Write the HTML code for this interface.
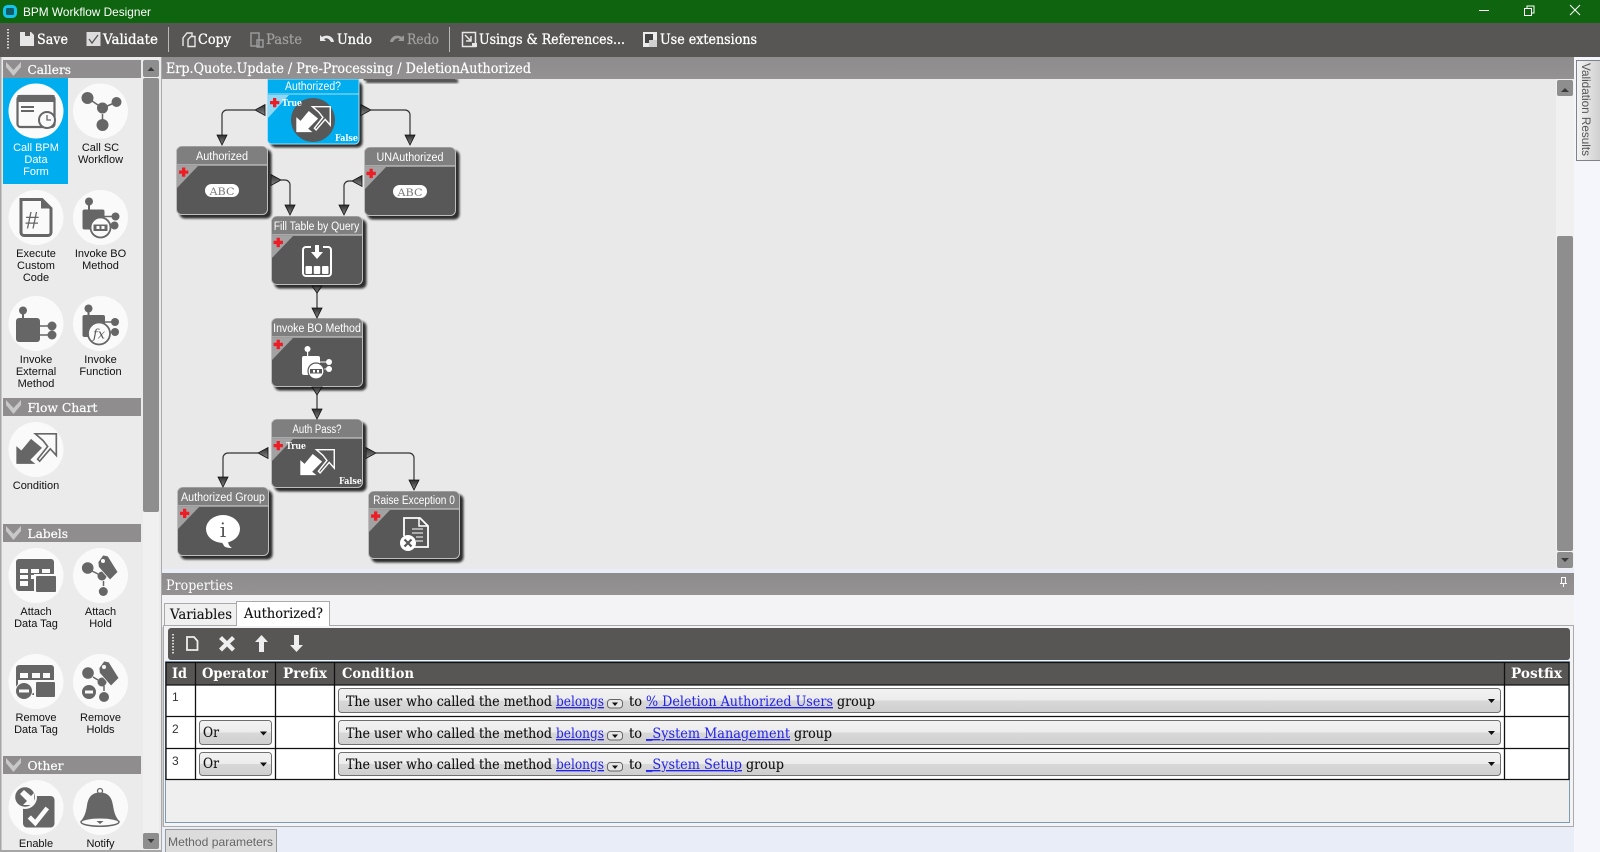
<!DOCTYPE html>
<html lang="en"><head><meta charset="utf-8"><title>BPM Workflow Designer</title>
<style>
html,body{margin:0;padding:0;width:1600px;height:852px;overflow:hidden;background:#f4f6fb}
svg{display:block}
.s{font-family:"DejaVu Serif","Liberation Serif",serif}
.a{font-family:"Liberation Sans",Arial,sans-serif}
.tb{font-family:"DejaVu Serif","Liberation Serif",serif;font-size:13.5px;fill:#fff;stroke:#fff;stroke-width:.3px}
.tg{font-family:"DejaVu Serif","Liberation Serif",serif;font-size:13.5px;fill:#a0a0a0;stroke:#a0a0a0;stroke-width:.2px}
.hd{font-family:"DejaVu Serif","Liberation Serif",serif;font-size:12.5px;fill:#fff;stroke:#fff;stroke-width:.2px}
.lb{font-family:"Liberation Sans",Arial,sans-serif;font-size:11px;fill:#111;text-anchor:middle}
.nt{font-family:"Liberation Sans",Arial,sans-serif;font-size:11.5px;fill:#fff;text-anchor:middle}
.th{font-family:"DejaVu Serif","Liberation Serif",serif;font-size:13.5px;font-weight:bold;fill:#fff}
.td{font-family:"DejaVu Serif","Liberation Serif",serif;font-size:13.5px;fill:#111;stroke:#111;stroke-width:.12px}
.lk{font-family:"DejaVu Serif","Liberation Serif",serif;font-size:13.5px;fill:#2222ee;text-decoration:underline}
.tf{font-family:"DejaVu Serif","Liberation Serif",serif;font-size:9.5px;font-weight:bold;fill:#fff}
</style></head><body>
<svg width="1600" height="852" viewBox="0 0 1600 852" xmlns="http://www.w3.org/2000/svg">
<defs>
<linearGradient id="btn" x1="0" y1="0" x2="0" y2="1"><stop offset="0" stop-color="#f2f2f2"/><stop offset=".5" stop-color="#ececec"/><stop offset=".5" stop-color="#d8d8d8"/><stop offset="1" stop-color="#cfcfcf"/></linearGradient>
<linearGradient id="hdr" x1="0" y1="0" x2="0" y2="1"><stop offset="0" stop-color="#8d8b8b"/><stop offset="1" stop-color="#949292"/></linearGradient>
<linearGradient id="vt" x1="0" y1="0" x2="1" y2="0"><stop offset="0" stop-color="#f4f4f4"/><stop offset="1" stop-color="#cfcfcf"/></linearGradient>
<linearGradient id="tri" x1="0" y1="0" x2="0" y2="1"><stop offset="0" stop-color="#2e2e2e"/><stop offset="1" stop-color="#888"/></linearGradient>
<filter id="sh" x="-10%" y="-10%" width="125%" height="130%"><feGaussianBlur stdDeviation="1"/></filter>
</defs>

<!-- title bar -->
<rect width="1600" height="23" fill="#0e640f"/>
<rect x="4.500" y="6.500" width="11" height="10" rx="3" fill="#0f5c66" stroke="#12c4ee" stroke-width="3"/>
<text x="23" y="16" class="a" font-size="12" fill="#fff" textLength="128" lengthAdjust="spacingAndGlyphs">BPM Workflow Designer</text>
<path d="M1479 10.500H1489" stroke="#fff" stroke-width="1"/>
<path d="M1524.500 8.500h7v7h-7zM1527 8.500v-2.500h7v7h-2.500" fill="none" stroke="#fff" stroke-width="1"/>
<path d="M1570 5l10 10M1580 5l-10 10" stroke="#fff" stroke-width="1"/>

<!-- toolbar -->
<rect y="23" width="1600" height="34" fill="#585654"/>
<path d="M8 29V50" stroke="#fff" stroke-width="1.500" stroke-dasharray="1.500 1.500"/>
<path d="M20 32h11l3 3v11H20z" fill="#e6e6e6"/><rect x="25" y="32" width="5" height="4" fill="#585654"/>
<text x="37" y="44" class="tb" textLength="31" lengthAdjust="spacingAndGlyphs">Save</text>
<rect x="86.500" y="32" width="14" height="14" fill="#dcdcdc"/><path d="M89 39l3 4 6-8" fill="none" stroke="#555" stroke-width="1.300"/>
<text x="103" y="44" class="tb" textLength="55" lengthAdjust="spacingAndGlyphs">Validate</text>
<path d="M168.500 27V52" stroke="#b9b9b9"/>
<path d="M183 46v-8l4-5h5v3" fill="none" stroke="#e6e6e6" stroke-width="1.400"/>
<path d="M188 46.500v-7l3-3h4v10z" fill="none" stroke="#e6e6e6" stroke-width="1.400"/>
<text x="198" y="44" class="tb" textLength="33" lengthAdjust="spacingAndGlyphs">Copy</text>
<path d="M251 33h8v13h-8zM257 40h6v7h-6z" fill="none" stroke="#999" stroke-width="1.500"/>
<text x="266" y="44" class="tg" textLength="36" lengthAdjust="spacingAndGlyphs">Paste</text>
<path d="M320 35v6h6l-2-2c2-1.500 5-1 7 3l3 0c-1-6-7-8-12-5z" fill="#eaeaea"/>
<text x="337" y="44" class="tb" textLength="35" lengthAdjust="spacingAndGlyphs">Undo</text>
<path d="M404 35v6h-6l2-2c-2-1.500-5-1-7 3l-3 0c1-6 7-8 12-5z" fill="#999"/>
<text x="407" y="44" class="tg" textLength="32" lengthAdjust="spacingAndGlyphs">Redo</text>
<path d="M449.500 27V52" stroke="#b9b9b9"/>
<rect x="462.500" y="32.500" width="13" height="14" fill="none" stroke="#e6e6e6" stroke-width="1.500"/><path d="M465 35l6 6M471 36v5h-5" fill="none" stroke="#e6e6e6" stroke-width="1.500"/><rect x="472" y="43" width="5" height="4" fill="#e6e6e6"/>
<text x="479" y="44" class="tb" textLength="146" lengthAdjust="spacingAndGlyphs">Usings &amp; References...</text>
<rect x="643" y="32" width="14" height="15" fill="#ececec"/><rect x="645" y="34" width="8" height="9" fill="#444"/><rect x="649" y="40" width="8" height="7" fill="#d0d0d0"/>
<text x="660" y="44" class="tb" textLength="97" lengthAdjust="spacingAndGlyphs">Use extensions</text>

<!-- left panel -->
<rect y="57" width="162" height="795" fill="#ebebeb"/>
<rect y="57" width="1.500" height="795" fill="#a6a6a6"/>
<rect y="850" width="162" height="2" fill="#a6a6a6"/>
<rect x="161" y="57" width="1.500" height="795" fill="#a9a9a9"/>
<!-- left scrollbar -->
<rect x="143" y="60" width="16" height="790" fill="#f0f0f0"/>
<rect x="143" y="60" width="16" height="17" rx="2" fill="#8e8e8e"/><path d="M147.500 71l3.500-4 3.500 4z" fill="#3a3a3a"/>
<rect x="143" y="78" width="16" height="434" rx="2" fill="#8e8e8e"/>
<rect x="143" y="833" width="16" height="16" rx="2" fill="#8e8e8e"/><path d="M147.500 839l3.500 4 3.500-4z" fill="#3a3a3a"/>

<!-- section headers -->
<rect x="3" y="60" width="138" height="18" fill="#8f8d8d"/><path d="M6 62l7.500 8 7.500-8v5l-7.500 9-7.500-9z" fill="#c8c8c8"/>
<text x="27.500" y="74" class="hd" textLength="43.500" lengthAdjust="spacingAndGlyphs">Callers</text>
<rect x="3" y="398" width="138" height="18" fill="#8f8d8d"/><path d="M6 400l7.500 8 7.500-8v5l-7.500 9-7.500-9z" fill="#c8c8c8"/>
<text x="27.500" y="412" class="hd" textLength="70" lengthAdjust="spacingAndGlyphs">Flow Chart</text>
<rect x="3" y="524" width="138" height="18" fill="#8f8d8d"/><path d="M6 526l7.500 8 7.500-8v5l-7.500 9-7.500-9z" fill="#c8c8c8"/>
<text x="27.500" y="538" class="hd" textLength="40.500" lengthAdjust="spacingAndGlyphs">Labels</text>
<rect x="3" y="756" width="138" height="18" fill="#8f8d8d"/><path d="M6 758l7.500 8 7.500-8v5l-7.500 9-7.500-9z" fill="#c8c8c8"/>
<text x="27.500" y="770" class="hd" textLength="36" lengthAdjust="spacingAndGlyphs">Other</text>

<!-- selected tile -->
<rect x="3" y="78" width="65" height="106" fill="#00aeef"/>

<!-- circles -->
<g fill="#fafafa">
<circle cx="36" cy="111" r="27.500"/><circle cx="100.500" cy="111" r="27.500"/>
<circle cx="36" cy="217.500" r="27.500"/><circle cx="100.500" cy="217.500" r="27.500"/>
<circle cx="36" cy="323.500" r="27.500"/><circle cx="100.500" cy="323.500" r="27.500"/>
<circle cx="36" cy="449.500" r="27.500"/>
<circle cx="36" cy="575.500" r="27.500"/><circle cx="100.500" cy="575.500" r="27.500"/>
<circle cx="36" cy="681.500" r="27.500"/><circle cx="100.500" cy="681.500" r="27.500"/>
<circle cx="36" cy="807.500" r="27.500"/><circle cx="100.500" cy="807.500" r="27.500"/>
</g>

<!-- Call BPM -->
<g transform="translate(36,111)">
<rect x="-18.500" y="-15" width="37" height="31" rx="3" fill="none" stroke="#666" stroke-width="2.200"/>
<path d="M-18.500 -16h37v7h-37z" fill="#666"/>
<path d="M-15 -5h13v2h-13zM-15 -1h13v2h-13z" fill="#666"/>
<circle cx="11" cy="9" r="8" fill="#fafafa" stroke="#666" stroke-width="2"/>
<path d="M11 4v5h4" fill="none" stroke="#666" stroke-width="1.300"/>
</g>
<!-- Call SC -->
<g transform="translate(100.500,111)" fill="#666">
<path d="M-13 -13L2 -3L16 -9" stroke="#666" stroke-width="1.500" fill="none"/>
<path d="M2 3V9" stroke="#666" stroke-width="1.500"/>
<circle cx="-13" cy="-13" r="6"/><circle cx="16" cy="-9" r="5"/><circle cx="2" cy="-3" r="5.500"/><circle cx="2" cy="14" r="6"/>
</g>
<!-- Custom Code -->
<g transform="translate(36,217.500)">
<path d="M-15 -18H6L15 -9V15a3 3 0 0 1-3 3H-12a3 3 0 0 1-3-3z" fill="none" stroke="#666" stroke-width="3"/>
<path d="M5 -19V-9H16z" fill="#666"/>
<text x="-4" y="11" class="a" font-size="24" fill="#666" text-anchor="middle">#</text>
</g>
<!-- Invoke BO -->
<g transform="translate(100.500,217.500)" fill="#666">
<circle cx="-11.500" cy="-16" r="4"/><rect x="-12.500" y="-14" width="2" height="8"/>
<rect x="-18" y="-8" width="22" height="20" rx="2"/>
<path d="M4 -1H14M4 7H14" stroke="#666" stroke-width="1.500"/>
<circle cx="15" cy="-1" r="4"/><circle cx="14" cy="8" r="4"/>
<circle cx="0" cy="10" r="10" fill="#fafafa" stroke="#666" stroke-width="1.800"/>
<rect x="-7" y="7" width="14" height="6.500" fill="#666"/><rect x="-4" y="8.500" width="3" height="3" fill="#fafafa"/><rect x="1" y="8.500" width="3" height="3" fill="#fafafa"/>
</g>
<!-- Invoke External -->
<g transform="translate(36,323.500)" fill="#666">
<circle cx="-13" cy="-13" r="4"/><rect x="-14" y="-12" width="2" height="8"/>
<rect x="-20" y="-5.500" width="24" height="24" rx="3"/>
<path d="M4 2.500H14M4 11.500H14" stroke="#666" stroke-width="1.500"/>
<circle cx="16" cy="2.500" r="4.500"/><circle cx="16" cy="11.500" r="4.500"/>
</g>
<!-- Invoke Function -->
<g transform="translate(100.500,323.500)" fill="#666">
<circle cx="-12" cy="-15" r="4"/><rect x="-13" y="-14" width="2" height="8"/>
<rect x="-18" y="-8.500" width="22.500" height="22" rx="2"/>
<path d="M4 -1.500H13M4 8.500H13" stroke="#666" stroke-width="1.500"/>
<circle cx="14.500" cy="-1.500" r="4"/><circle cx="14.500" cy="8.500" r="4"/>
<circle cx="-1.500" cy="10" r="11" fill="#fafafa" stroke="#666" stroke-width="1.800"/>
<text x="-1.500" y="15" class="s" font-size="13" font-style="italic" fill="#555" text-anchor="middle">fx</text>
</g>
<!-- Condition -->
<g transform="translate(36,449.500) scale(.333) translate(-107,-509)">
<path d="M48 552V499L63 512L92 477L125 504L90 540L105 552Z" fill="#666"/>
<path d="M105 462H168V527L150 507L118 544L112 538L142 500L128 482Z" fill="none" stroke="#666" stroke-width="5"/>
</g>
<!-- Attach Data Tag -->
<g>
<rect x="16" y="559" width="38" height="32" rx="3" fill="#666"/>
<rect x="20" y="569" width="8" height="4" fill="#fafafa"/><rect x="31" y="569" width="8" height="4" fill="#fafafa"/><rect x="42" y="569" width="8" height="4" fill="#fafafa"/>
<rect x="20" y="575" width="8" height="4" fill="#fafafa"/><rect x="31" y="575" width="4" height="4" fill="#fafafa"/>
<rect x="20" y="581" width="8" height="5" fill="#fafafa"/>
<rect x="34" y="574" width="24" height="20" fill="#fafafa"/>
<rect x="36" y="576" width="20" height="16" rx="1" fill="#666"/>
</g>
<!-- Attach Hold -->
<g fill="#666">
<path d="M92 571L98 574M103.500 581V586" fill="none" stroke="#666" stroke-width="1.500"/>
<circle cx="87.700" cy="568" r="5.800"/>
<circle cx="102" cy="576" r="4.500"/>
<path d="M98 562L103 555L108 556L118 572L110 580L98.500 567Z" stroke="#fafafa" stroke-width=".8"/>
<circle cx="103" cy="561" r="2" fill="#fafafa"/>
<circle cx="103.300" cy="591.500" r="4.500"/>
</g>
<!-- Remove Data Tag -->
<g>
<rect x="16" y="665" width="38" height="30" rx="3" fill="#666"/>
<rect x="20" y="673" width="8" height="5" fill="#fafafa"/><rect x="32" y="673" width="8" height="5" fill="#fafafa"/><rect x="43" y="673" width="7" height="5" fill="#fafafa"/>
<rect x="18" y="680" width="34" height="13" fill="#fafafa"/>
<rect x="34" y="680" width="23" height="19" fill="#fafafa"/>
<rect x="36" y="682" width="19" height="15" rx="1" fill="#666"/>
<circle cx="24" cy="691" r="9" fill="#fafafa"/><circle cx="24" cy="691" r="8" fill="#666"/><rect x="19" y="689.500" width="10" height="3" fill="#fafafa"/>
</g>
<!-- Remove Holds -->
<g fill="#666">
<path d="M93 677L98 680M104 686V691" fill="none" stroke="#666" stroke-width="1.500"/>
<circle cx="88" cy="673" r="5.800"/>
<circle cx="102" cy="682" r="4.500"/>
<path d="M99 668L104 661L109 662L119 678L111 686L99.500 673Z" stroke="#fafafa" stroke-width=".8"/>
<circle cx="104" cy="667" r="2" fill="#fafafa"/>
<circle cx="104" cy="697" r="5"/>
<circle cx="89" cy="692" r="7.500" stroke="#fafafa"/><rect x="85" y="690.500" width="8" height="3" fill="#fafafa"/>
</g>
<!-- Enable -->
<g>
<rect x="23" y="796" width="31.500" height="31.500" rx="4" fill="#666"/>
<circle cx="25" cy="797" r="12" fill="#fafafa"/><circle cx="25" cy="797" r="9.800" fill="#666"/>
<path d="M34 805V793L31 796L24 790L20 794L27 801L23 805Z" fill="#fafafa"/>
<path d="M29.300 817l6 6 12-15" fill="none" stroke="#fafafa" stroke-width="4.500"/>
</g>
<!-- Notify -->
<g fill="#666">
<circle cx="100" cy="791" r="2.500" fill="none" stroke="#666" stroke-width="1.300"/>
<path d="M100 792.500c-9 0-12 6-13 13-1 6-2 10-5 14l18 4 18-4c-3-4-4-8-5-14-1-7-4-13-13-13z"/>
<ellipse cx="100" cy="822" rx="19" ry="4.300" fill="#fafafa" stroke="#666" stroke-width="1.500"/>
<path d="M96.500 821h7l-3.500 3z"/>
</g>

<!-- tile labels -->
<text x="36" y="151" class="lb" style="fill:#fff">Call BPM</text><text x="36" y="163" class="lb" style="fill:#fff">Data</text><text x="36" y="175" class="lb" style="fill:#fff">Form</text>
<text x="100.500" y="151" class="lb">Call SC</text><text x="100.500" y="163" class="lb">Workflow</text>
<text x="36" y="257" class="lb">Execute</text><text x="36" y="269" class="lb">Custom</text><text x="36" y="281" class="lb">Code</text>
<text x="100.500" y="257" class="lb">Invoke BO</text><text x="100.500" y="269" class="lb">Method</text>
<text x="36" y="363" class="lb">Invoke</text><text x="36" y="375" class="lb">External</text><text x="36" y="387" class="lb">Method</text>
<text x="100.500" y="363" class="lb">Invoke</text><text x="100.500" y="375" class="lb">Function</text>
<text x="36" y="489" class="lb">Condition</text>
<text x="36" y="615" class="lb">Attach</text><text x="36" y="627" class="lb">Data Tag</text>
<text x="100.500" y="615" class="lb">Attach</text><text x="100.500" y="627" class="lb">Hold</text>
<text x="36" y="721" class="lb">Remove</text><text x="36" y="733" class="lb">Data Tag</text>
<text x="100.500" y="721" class="lb">Remove</text><text x="100.500" y="733" class="lb">Holds</text>
<text x="36" y="847" class="lb">Enable</text>
<text x="100.500" y="847" class="lb">Notify</text>

<!-- canvas -->
<rect x="162" y="79" width="1394" height="490" fill="#e9e9e9"/>
<rect x="1556" y="79" width="18" height="490" fill="#f0f0f0"/>
<rect x="1557" y="80" width="16" height="16" rx="2" fill="#8e8e8e"/><path d="M1561 92l4-4 4 4z" fill="#3a3a3a"/>
<rect x="1557" y="236" width="16" height="315" rx="2" fill="#8e8e8e"/>
<rect x="1557" y="552" width="16" height="16" rx="2" fill="#8e8e8e"/><path d="M1561 558l4 4 4-4z" fill="#3a3a3a"/>

<!-- connectors -->
<g fill="none" stroke="#333" stroke-width="1.200">
<path d="M255 110H227a5 5 0 0 0-5 5V136"/>
<path d="M371 110H405a5 5 0 0 1 5 5V136"/>
<path d="M281 180H285a5 5 0 0 1 5 5V206"/>
<path d="M352 181H349a5 5 0 0 0-5 5V206"/>
<path d="M317 290V309"/><path d="M317 394V409"/>
<path d="M258 453H228a5 5 0 0 0-5 5V478"/>
<path d="M376 453H409a5 5 0 0 1 5 5V481"/>
</g>

<!-- top partial node -->
<rect x="366" y="79" width="92" height="4" fill="#222" opacity=".8" filter="url(#sh)"/>
<rect x="363.500" y="79" width="91.500" height="1.500" fill="#585858"/>

<!-- nodes: shadow + body -->
<g>
<rect x="270.500" y="82" width="92" height="65.500" rx="5" fill="#111" opacity=".85" filter="url(#sh)"/>
<path d="M267.500 79V140a4 4 0 0 0 4 4H355a4 4 0 0 0 4-4V79z" fill="#00aeef" stroke="#a8def5"/>
<path d="M268 94H359" stroke="#a8def5"/>
<path d="M268 95H289L268 118z" fill="#8ed8f5"/>
<circle cx="313" cy="120" r="22" fill="#585858"/>
<g transform="translate(313,120) scale(.283) translate(-107,-509)">
<path d="M48 552V499L63 512L92 477L125 504L90 540L105 552Z" fill="#fff"/>
<path d="M105 462H168V527L150 507L118 544L112 538L142 500L128 482Z" fill="none" stroke="#fff" stroke-width="5"/>
</g>
<text x="313" y="90" class="nt" textLength="56" lengthAdjust="spacingAndGlyphs">Authorized?</text>
<text x="282" y="106" class="tf" textLength="20" lengthAdjust="spacingAndGlyphs">True</text>
<text x="335" y="141" class="tf" textLength="23" lengthAdjust="spacingAndGlyphs">False</text>
<path d="M273 98h3.300v3h3v3.300h-3v3h-3.300v-3h-3v-3.300h3z" fill="#ee1c25"/>
</g>

<g>
<rect x="179.500" y="149.500" width="92" height="69" rx="5" fill="#111" opacity=".85" filter="url(#sh)"/>
<rect x="176.500" y="146.500" width="91" height="68" rx="5" fill="#585858" stroke="#bdbdbd"/>
<path d="M177 165V151.500a5 5 0 0 1 5-5H262a5 5 0 0 1 5 5V165z" fill="#7f7f7f"/><path d="M177 165H267" stroke="#c4c4c4" stroke-width="1.200"/>
<path d="M177 166H198L177 188z" fill="#a2a2a2"/>
<path d="M182 167.500h3.300v3h3v3.300h-3v3h-3.300v-3h-3v-3.300h3z" fill="#ee1c25"/>
<text x="222" y="160" class="nt" textLength="52" lengthAdjust="spacingAndGlyphs">Authorized</text>
<rect x="205" y="184" width="34" height="13" rx="6.500" fill="#fff"/>
<text x="222" y="195" class="s" font-size="10.500" fill="#777" text-anchor="middle" textLength="25" lengthAdjust="spacingAndGlyphs">ABC</text>
</g>

<g>
<rect x="367.500" y="150.500" width="92" height="69" rx="5" fill="#111" opacity=".85" filter="url(#sh)"/>
<rect x="364.500" y="147.500" width="91" height="68" rx="5" fill="#585858" stroke="#bdbdbd"/>
<path d="M365 166V152.500a5 5 0 0 1 5-5H450a5 5 0 0 1 5 5V166z" fill="#7f7f7f"/><path d="M365 166H455" stroke="#c4c4c4" stroke-width="1.200"/>
<path d="M365 167H386L365 189z" fill="#a2a2a2"/>
<path d="M369.500 168.800h3.300v3h3v3.300h-3v3h-3.300v-3h-3v-3.300h3z" fill="#ee1c25"/>
<text x="410" y="161" class="nt" textLength="67" lengthAdjust="spacingAndGlyphs">UNAuthorized</text>
<rect x="393" y="185" width="34" height="13" rx="6.500" fill="#fff"/>
<text x="410" y="196" class="s" font-size="10.500" fill="#777" text-anchor="middle" textLength="25" lengthAdjust="spacingAndGlyphs">ABC</text>
</g>

<g>
<rect x="274.500" y="219.500" width="92" height="69" rx="5" fill="#111" opacity=".85" filter="url(#sh)"/>
<rect x="271.500" y="216.500" width="91" height="68" rx="5" fill="#585858" stroke="#bdbdbd"/>
<path d="M272 235V221.500a5 5 0 0 1 5-5H357a5 5 0 0 1 5 5V235z" fill="#7f7f7f"/><path d="M272 235H362" stroke="#c4c4c4" stroke-width="1.200"/>
<path d="M272 236H293L272 258z" fill="#a2a2a2"/>
<path d="M276.600 237.800h3.300v3h3v3.300h-3v3h-3.300v-3h-3v-3.300h3z" fill="#ee1c25"/>
<text x="316.500" y="230" class="nt" textLength="85.600" lengthAdjust="spacingAndGlyphs">Fill Table by Query</text>
<path d="M311 247H306a3 3 0 0 0-3 3V273a3 3 0 0 0 3 3H328a3 3 0 0 0 3-3V250a3 3 0 0 0-3-3H323" fill="none" stroke="#fff" stroke-width="2"/>
<path d="M315 245h4v7h4l-6 7-6-7h4z" fill="#fff"/>
<rect x="305.500" y="266" width="6.500" height="8" rx="1" fill="#fff"/><rect x="313.750" y="266" width="6.500" height="8" rx="1" fill="#fff"/><rect x="322" y="266" width="6.500" height="8" rx="1" fill="#fff"/>
</g>

<g>
<rect x="274.500" y="321.500" width="92" height="69" rx="5" fill="#111" opacity=".85" filter="url(#sh)"/>
<rect x="271.500" y="318.500" width="91" height="68" rx="5" fill="#585858" stroke="#bdbdbd"/>
<path d="M272 337V323.500a5 5 0 0 1 5-5H357a5 5 0 0 1 5 5V337z" fill="#7f7f7f"/><path d="M272 337H362" stroke="#c4c4c4" stroke-width="1.200"/>
<path d="M272 338H293L272 360z" fill="#a2a2a2"/>
<path d="M276.600 339.800h3.300v3h3v3.300h-3v3h-3.300v-3h-3v-3.300h3z" fill="#ee1c25"/>
<text x="317" y="332" class="nt" textLength="87.700" lengthAdjust="spacingAndGlyphs">Invoke BO Method</text>
<g fill="#fff">
<circle cx="307.500" cy="349" r="3"/><rect x="307" y="350" width="1.200" height="7"/>
<rect x="302" y="356" width="18" height="19" rx="2"/>
<path d="M320 362H327M320 369H327" stroke="#fff" stroke-width="1"/>
<circle cx="329" cy="362" r="3"/><circle cx="329" cy="369" r="3"/>
<circle cx="316" cy="371" r="8" fill="#fff" stroke="#585858" stroke-width="1.200"/>
<rect x="310" y="369" width="12" height="4.500" fill="#585858"/><rect x="313" y="370" width="2" height="2.500" fill="#fff"/><rect x="317" y="370" width="2" height="2.500" fill="#fff"/>
</g>
</g>

<g>
<rect x="274.500" y="422.500" width="92" height="69" rx="5" fill="#111" opacity=".85" filter="url(#sh)"/>
<rect x="271.500" y="419.500" width="91" height="68" rx="5" fill="#585858" stroke="#bdbdbd"/>
<path d="M272 438V424.500a5 5 0 0 1 5-5H357a5 5 0 0 1 5 5V438z" fill="#7f7f7f"/><path d="M272 438H362" stroke="#c4c4c4" stroke-width="1.200"/>
<path d="M272 439H293L272 461z" fill="#a2a2a2"/>
<path d="M276.600 441h3.300v3h3v3.300h-3v3h-3.300v-3h-3v-3.300h3z" fill="#ee1c25"/>
<text x="317" y="433" class="nt" textLength="49" lengthAdjust="spacingAndGlyphs">Auth Pass?</text>
<g transform="translate(317,463) scale(.283) translate(-107,-509)">
<path d="M48 552V499L63 512L92 477L125 504L90 540L105 552Z" fill="#fff"/>
<path d="M105 462H168V527L150 507L118 544L112 538L142 500L128 482Z" fill="none" stroke="#fff" stroke-width="5"/>
</g>
<text x="286" y="449" class="tf" textLength="20" lengthAdjust="spacingAndGlyphs">True</text>
<text x="339" y="484" class="tf" textLength="23" lengthAdjust="spacingAndGlyphs">False</text>
</g>

<g>
<rect x="180.500" y="490.500" width="92" height="69" rx="5" fill="#111" opacity=".85" filter="url(#sh)"/>
<rect x="177.500" y="487.500" width="91" height="68" rx="5" fill="#585858" stroke="#bdbdbd"/>
<path d="M178 506V492.500a5 5 0 0 1 5-5H263a5 5 0 0 1 5 5V506z" fill="#7f7f7f"/><path d="M178 506H268" stroke="#c4c4c4" stroke-width="1.200"/>
<path d="M178 507H199L178 529z" fill="#a2a2a2"/>
<path d="M183 508.700h3.300v3h3v3.300h-3v3h-3.300v-3h-3v-3.300h3z" fill="#ee1c25"/>
<text x="223" y="501" class="nt" textLength="84" lengthAdjust="spacingAndGlyphs">Authorized Group</text>
<ellipse cx="223" cy="529" rx="17" ry="14" fill="#fff"/><path d="M218 540c3 2 5 3 6 6 2 2 6 2 8 2-3-2-4-4-4-8z" fill="#fff"/>
<text x="223" y="537" class="s" font-size="20" fill="#585858" text-anchor="middle">i</text>
</g>

<g>
<rect x="371.500" y="494.500" width="92" height="68" rx="5" fill="#111" opacity=".85" filter="url(#sh)"/>
<rect x="368.500" y="491.500" width="91" height="67" rx="5" fill="#585858" stroke="#bdbdbd"/>
<path d="M369 509V496.500a5 5 0 0 1 5-5H454a5 5 0 0 1 5 5V509z" fill="#7f7f7f"/><path d="M369 509H459" stroke="#c4c4c4" stroke-width="1.200"/>
<path d="M369 510H390L369 532z" fill="#a2a2a2"/>
<path d="M374 511.400h3.300v3h3v3.300h-3v3h-3.300v-3h-3v-3.300h3z" fill="#ee1c25"/>
<text x="414" y="504" class="nt" textLength="81.700" lengthAdjust="spacingAndGlyphs">Raise Exception 0</text>
<path d="M404 536V518H420L428 526V547H413" fill="none" stroke="#fff" stroke-width="1.800"/>
<path d="M419 518v8h9" fill="none" stroke="#fff" stroke-width="1.500"/>
<path d="M412 529H423M412 533H423M416 537H423M416 541H423" stroke="#fff" stroke-width="1"/>
<circle cx="408" cy="543" r="8" fill="#fff"/><path d="M404.500 539.500l7 7M411.500 539.500l-7 7" stroke="#585858" stroke-width="2.200"/>
</g>

<!-- ports -->
<g fill="url(#tri)" stroke="#111" stroke-width=".8">
<path d="M265 104.500V115.500L255 110z"/>
<path d="M361 104.500V115.500L371 110z"/>
<path d="M217 135H227L222 145z"/>
<path d="M405 135H415L410 145z"/>
<path d="M271 174.500V185.500L281 180z"/>
<path d="M362 175.500V186.500L352 181z"/>
<path d="M285 205H295L290 215z"/>
<path d="M339 205H349L344 215z"/>
<path d="M312 286H322L317 293z"/>
<path d="M312 308H322L317 318z"/>
<path d="M312 387H322L317 395z"/>
<path d="M312 409H322L317 419z"/>
<path d="M268 447.500V458.500L258 453z"/>
<path d="M366 447.500V458.500L376 453z"/>
<path d="M218 477H228L223 487z"/>
<path d="M409 480H419L414 490z"/>
</g>

<!-- canvas header -->
<rect x="162" y="57" width="1412" height="22" fill="url(#hdr)"/>
<text x="166" y="73" class="s" font-size="13.500" fill="#fff" stroke="#fff" stroke-width=".2" textLength="365" lengthAdjust="spacingAndGlyphs">Erp.Quote.Update / Pre-Processing / DeletionAuthorized</text>

<!-- right strip -->
<rect x="1574" y="57" width="26" height="795" fill="#f4f6fb"/>
<rect x="1576.500" y="60.500" width="24" height="100" fill="url(#vt)" stroke="#7d828c"/>
<text transform="translate(1582,63) rotate(90)" class="a" font-size="12" fill="#555" textLength="93" lengthAdjust="spacingAndGlyphs">Validation Results</text>

<!-- properties -->
<rect x="162" y="569" width="1412" height="4" fill="#e9edf8"/>
<rect x="162" y="573" width="1412" height="22" fill="url(#hdr)"/>
<text x="166" y="590" class="s" font-size="13.500" fill="#fff" textLength="67" lengthAdjust="spacingAndGlyphs">Properties</text>
<path d="M1561.500 577.500h4v6h-4zM1560 583.500h7M1563.500 584v3" fill="none" stroke="#fff" stroke-width="1"/>
<rect x="162" y="595" width="1412" height="32" fill="#f3f3f6"/>
<rect x="162" y="827" width="1412" height="25" fill="#e9edf8"/>
<!-- tabs -->
<rect x="163.500" y="625.500" width="1410" height="201" fill="#f3f3f6" stroke="#aaa"/>
<rect x="164.500" y="603.500" width="72" height="22" fill="#f0f0f0" stroke="#aaa"/>
<path d="M236.500 625.500V601.500H329.500V625.500" fill="#fff" stroke="#aaa"/>
<rect x="237" y="622" width="92" height="4" fill="#fff"/>
<text x="170" y="619" class="td" textLength="62" lengthAdjust="spacingAndGlyphs">Variables</text>
<text x="244" y="618" class="td" textLength="79" lengthAdjust="spacingAndGlyphs">Authorized?</text>
<!-- grid toolbar -->
<rect x="168" y="628" width="1402" height="32" rx="3" fill="#585654"/>
<path d="M173 634V654" stroke="#fff" stroke-width="1.500" stroke-dasharray="1.500 1.500"/>
<path d="M187 637h7l3.500 4v9h-10.500z" fill="none" stroke="#eee" stroke-width="1.800"/>
<path d="M219 639l3-3 5 5 5-5 3 3-5 4.500 5 5-3 3-5-5-5 5-3-3 5-5z" fill="#eee"/>
<path d="M261.500 635l6.500 7h-4v10h-5v-10h-4z" fill="#eee"/>
<path d="M296.500 652l6.500-7h-4V635h-5v10h-4z" fill="#eee"/>

<!-- inner frame -->
<rect x="165.500" y="661.500" width="1404" height="161" fill="#efefef" stroke="#7d9ab3"/>
<!-- table -->
<rect x="166" y="662" width="1403" height="23" fill="#585654"/>
<rect x="166" y="685" width="1403" height="94" fill="#fff"/>
<g stroke="#111" stroke-width="1.300" fill="none">
<path d="M166 662.500H1569M166 685H1569M166 716.500H1569M166 748.500H1569M166 779.500H1569"/>
<path d="M166 662V780M195.500 662V780M275.500 662V780M334.500 662V780M1504.500 662V780M1569 662V780"/>
</g>
<text x="172" y="678" class="th" textLength="15" lengthAdjust="spacingAndGlyphs">Id</text>
<text x="202" y="678" class="th" textLength="66" lengthAdjust="spacingAndGlyphs">Operator</text>
<text x="283" y="678" class="th" textLength="44" lengthAdjust="spacingAndGlyphs">Prefix</text>
<text x="342" y="678" class="th" textLength="72" lengthAdjust="spacingAndGlyphs">Condition</text>
<text x="1511" y="678" class="th" textLength="51" lengthAdjust="spacingAndGlyphs">Postfix</text>
<text x="172" y="701" class="a" font-size="12" fill="#333">1</text>
<text x="172" y="733" class="a" font-size="12" fill="#333">2</text>
<text x="172" y="765" class="a" font-size="12" fill="#333">3</text>

<!-- Or dropdowns -->
<rect x="199.500" y="720.500" width="72" height="24" rx="3" fill="url(#btn)" stroke="#707070"/>
<text x="203" y="737" class="td" textLength="16" lengthAdjust="spacingAndGlyphs">Or</text>
<path d="M260 731.500h7l-3.500 4z" fill="#111"/>
<rect x="199.500" y="752.500" width="72" height="23" rx="3" fill="url(#btn)" stroke="#707070"/>
<text x="203" y="768" class="td" textLength="16" lengthAdjust="spacingAndGlyphs">Or</text>
<path d="M260 762.500h7l-3.500 4z" fill="#111"/>

<!-- condition row 1 -->
<rect x="338.500" y="688.500" width="1162" height="24" rx="3" fill="url(#btn)" stroke="#707070"/>
<text x="346" y="706" class="td" textLength="206" lengthAdjust="spacingAndGlyphs">The user who called the method</text>
<text x="556" y="706" class="lk" textLength="48" lengthAdjust="spacingAndGlyphs">belongs</text>
<rect x="607.500" y="699.500" width="15" height="8.500" rx="3" fill="#e6e6e6" stroke="#666"/><path d="M612 702.500h6l-3 3.500z" fill="#111"/>
<text x="629" y="706" class="td" textLength="13" lengthAdjust="spacingAndGlyphs">to</text>
<text x="646" y="706" class="lk" textLength="187" lengthAdjust="spacingAndGlyphs">% Deletion Authorized Users</text>
<text x="837" y="706" class="td" textLength="38" lengthAdjust="spacingAndGlyphs">group</text>
<path d="M1488 699h7l-3.500 4z" fill="#111"/>
<!-- row 2 -->
<rect x="338.500" y="720.500" width="1162" height="24" rx="3" fill="url(#btn)" stroke="#707070"/>
<text x="346" y="738" class="td" textLength="206" lengthAdjust="spacingAndGlyphs">The user who called the method</text>
<text x="556" y="738" class="lk" textLength="48" lengthAdjust="spacingAndGlyphs">belongs</text>
<rect x="607.500" y="731.500" width="15" height="8.500" rx="3" fill="#e6e6e6" stroke="#666"/><path d="M612 734.500h6l-3 3.500z" fill="#111"/>
<text x="629" y="738" class="td" textLength="13" lengthAdjust="spacingAndGlyphs">to</text>
<text x="646" y="738" class="lk" textLength="144" lengthAdjust="spacingAndGlyphs">_System Management</text>
<text x="794" y="738" class="td" textLength="38" lengthAdjust="spacingAndGlyphs">group</text>
<path d="M1488 731h7l-3.500 4z" fill="#111"/>
<!-- row 3 -->
<rect x="338.500" y="752.500" width="1162" height="23" rx="3" fill="url(#btn)" stroke="#707070"/>
<text x="346" y="769" class="td" textLength="206" lengthAdjust="spacingAndGlyphs">The user who called the method</text>
<text x="556" y="769" class="lk" textLength="48" lengthAdjust="spacingAndGlyphs">belongs</text>
<rect x="607.500" y="762.500" width="15" height="8.500" rx="3" fill="#e6e6e6" stroke="#666"/><path d="M612 765.500h6l-3 3.500z" fill="#111"/>
<text x="629" y="769" class="td" textLength="13" lengthAdjust="spacingAndGlyphs">to</text>
<text x="646" y="769" class="lk" textLength="96" lengthAdjust="spacingAndGlyphs">_System Setup</text>
<text x="746" y="769" class="td" textLength="38" lengthAdjust="spacingAndGlyphs">group</text>
<path d="M1488 762h7l-3.500 4z" fill="#111"/>

<!-- method parameters tab -->
<rect x="165.500" y="829.500" width="111" height="23" fill="#dcdcdc" stroke="#9a9a9a"/>
<text x="168" y="846" class="a" font-size="12" fill="#666" textLength="105" lengthAdjust="spacingAndGlyphs">Method parameters</text>
</svg>
</body></html>
